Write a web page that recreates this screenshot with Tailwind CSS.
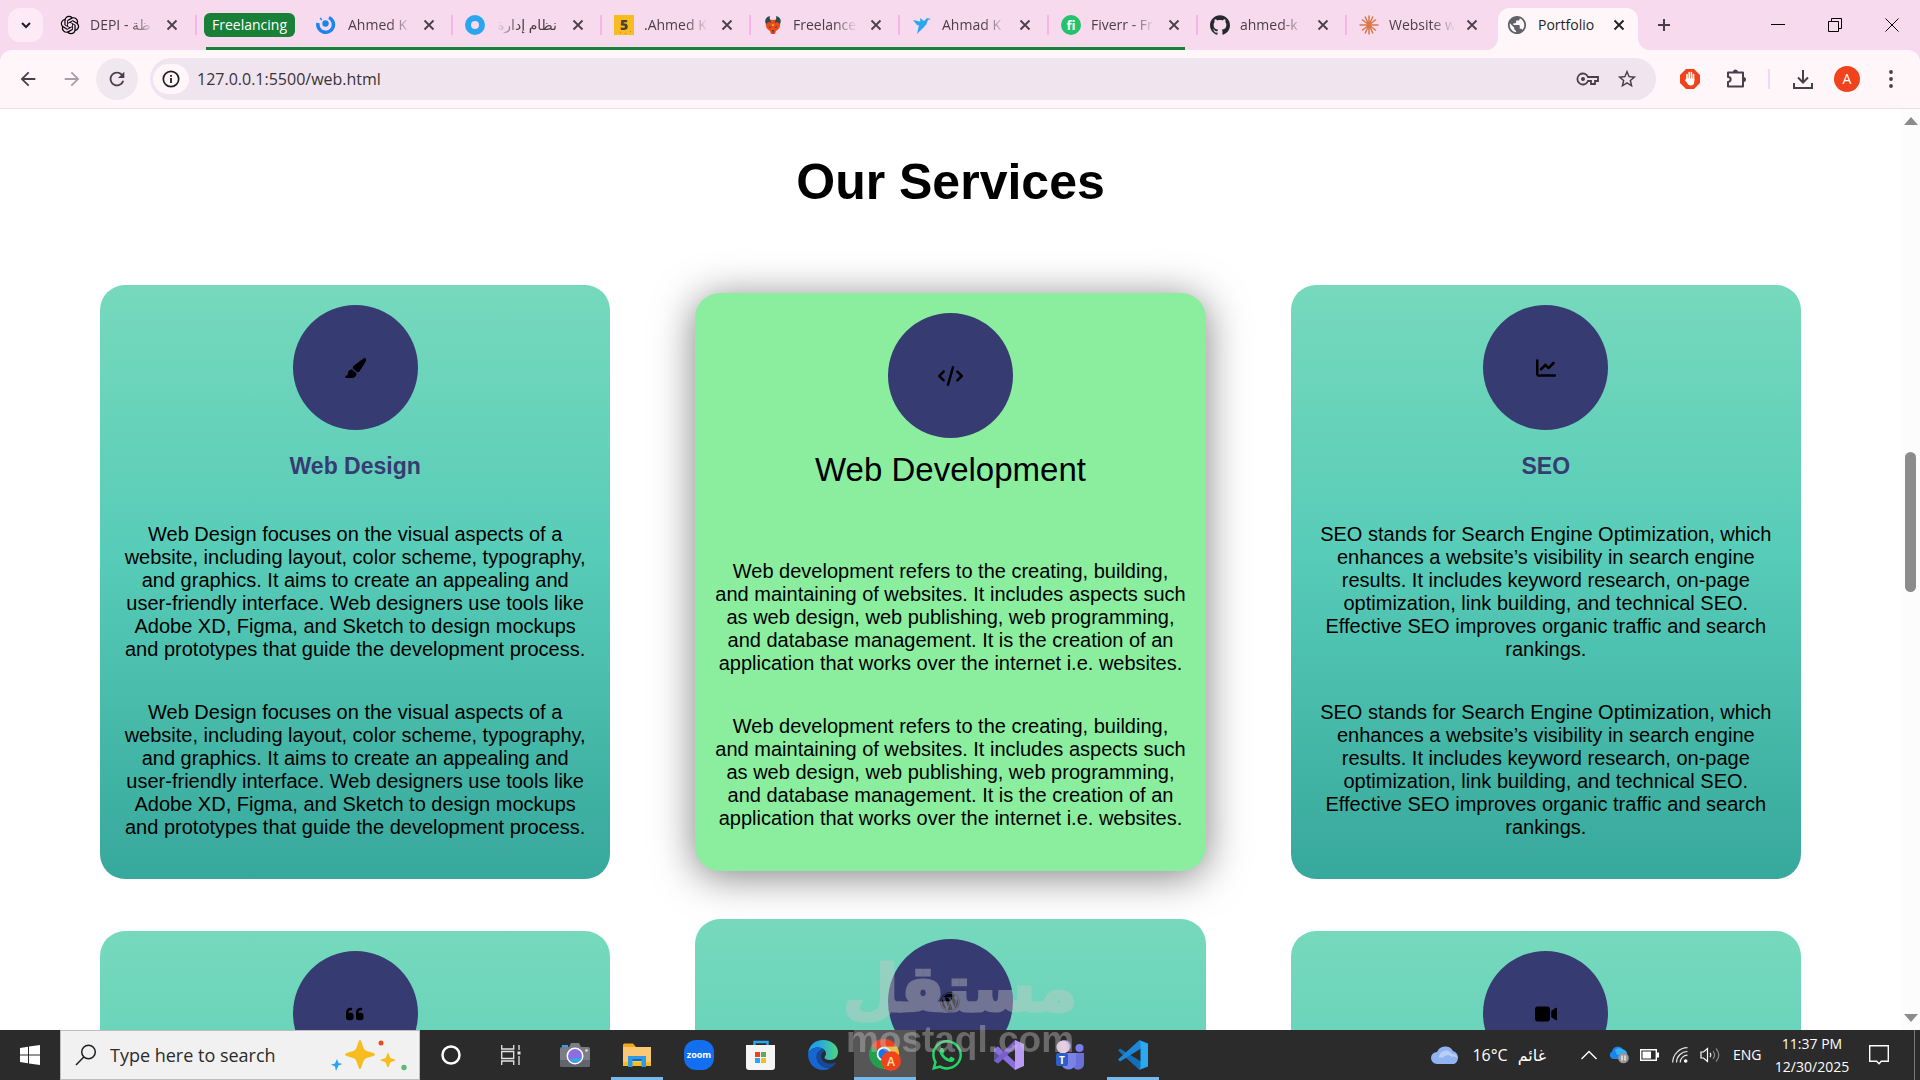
<!DOCTYPE html>
<html lang="en">
<head>
  <meta charset="UTF-8" />
  <meta name="viewport" content="width=device-width, initial-scale=1.0" />
  <title>Portfolio</title>
  <script src="https://cdn.jsdelivr.net/npm/@tailwindcss/browser@4"></script>
</head>
<body class="h-screen flex flex-col overflow-hidden bg-white font-['Open_Sans','DejaVu_Sans',sans-serif]">

  <svg class="hidden">
    <symbol id="x" viewBox="0 0 12 12"><path d="M1.5 1.5l9 9M10.5 1.5l-9 9" fill="none" stroke="currentColor" stroke-width="1.8" /></symbol>
    <symbol id="back" viewBox="0 0 24 24"><path fill="currentColor" d="M20 11H7.83l5.59-5.59L12 4l-8 8 8 8 1.41-1.41L7.83 13H20v-2z" /></symbol>
  </svg>

  <!-- Browser chrome -->
  <header class="bg-[#f7daee] text-[#4a3f48] shrink-0">
    <div class="h-[50px] flex items-center">
      <button aria-label="Search tabs" class="ml-2 w-[35px] h-[34px] rounded-xl bg-[#fdeaf6] flex items-center justify-center shrink-0">
        <svg class="w-3 h-3 text-[#1f1f1f]" viewBox="0 0 12 12"><path d="M2 4l4 4 4-4" fill="none" stroke="currentColor" stroke-width="2" /></svg>
      </button>
      <div class="ml-[5px] w-[149px] pl-3 flex items-center shrink-0 relative">
        <svg class="w-5 h-5 shrink-0 text-black" viewBox="-1 -1 26 26"><path fill="currentColor" d="M22.2819 9.8211a5.9847 5.9847 0 0 0-.5157-4.9108 6.0462 6.0462 0 0 0-6.5098-2.9A6.0651 6.0651 0 0 0 4.9807 4.1818a5.9847 5.9847 0 0 0-3.9977 2.9 6.0462 6.0462 0 0 0 .7427 7.0966 5.98 5.98 0 0 0 .511 4.9107 6.051 6.051 0 0 0 6.5146 2.9001A5.9847 5.9847 0 0 0 13.2599 24a6.0557 6.0557 0 0 0 5.7718-4.2058 5.9894 5.9894 0 0 0 3.9977-2.9001 6.0557 6.0557 0 0 0-.7475-7.0729zm-9.022 12.6081a4.4755 4.4755 0 0 1-2.8764-1.0408l.1419-.0804 4.7783-2.7582a.7948.7948 0 0 0 .3927-.6813v-6.7369l2.02 1.1686a.071.071 0 0 1 .038.052v5.5826a4.504 4.504 0 0 1-4.4945 4.4944zm-9.6607-4.1254a4.4708 4.4708 0 0 1-.5346-3.0137l.142.0852 4.783 2.7582a.7712.7712 0 0 0 .7806 0l5.8428-3.3685v2.3324a.0804.0804 0 0 1-.0332.0615L9.74 19.9502a4.4992 4.4992 0 0 1-6.1408-1.6464zM2.3408 7.8956a4.485 4.485 0 0 1 2.3655-1.9728V11.6a.7664.7664 0 0 0 .3879.6765l5.8144 3.3543-2.0201 1.1685a.0757.0757 0 0 1-.071 0l-4.8303-2.7865A4.504 4.504 0 0 1 2.3408 7.872zm16.5963 3.8558L13.1038 8.364 15.1192 7.2a.0757.0757 0 0 1 .071 0l4.8303 2.7913a4.4944 4.4944 0 0 1-.6765 8.1042v-5.6772a.79.79 0 0 0-.407-.667zm2.0107-3.0231l-.142-.0852-4.7735-2.7818a.7759.7759 0 0 0-.7854 0L9.409 9.2297V6.8974a.0662.0662 0 0 1 .0284-.0615l4.8303-2.7866a4.4992 4.4992 0 0 1 6.6802 4.66zM8.3065 12.863l-2.02-1.1638a.0804.0804 0 0 1-.038-.0567V6.0742a4.4992 4.4992 0 0 1 7.3757-3.4537l-.142.0805L8.704 5.459a.7948.7948 0 0 0-.3927.6813zm1.0976-2.3654l2.602-1.4998 2.6069 1.4998v2.9994l-2.5974 1.4997-2.6067-1.4997Z" /></svg>
        <span class="ml-[10px] w-[64px] mr-[1px] text-sm whitespace-nowrap overflow-hidden [mask-image:linear-gradient(to_right,#000_65%,transparent)]">DEPI - ظة</span>
        <button aria-label="Close tab" class="ml-[7px] w-5 h-5 flex items-center justify-center"><svg class="w-3 h-3"><use href="#x" /></svg></button>
        <span class="absolute right-0 w-[2px] h-5 bg-[#f5b5e8]"></span>
      </div>

      <!-- Tab group -->
      <div class="ml-[7px] h-full flex items-center relative shrink-0">
        <button class="w-[91px] h-6 mr-[9px] rounded-md bg-[#188038] text-white text-sm">Freelancing</button>
        <div class="w-[149px] pl-3 flex items-center relative">
          <svg class="w-5 h-5 shrink-0" viewBox="0 0 20 20" fill="none"><circle cx="9.5" cy="8.5" r="3.2" fill="#1a85ee" /><path d="M2 8a7.800 7.800 0 1 0 11-5.500" stroke="#1a85ee" stroke-width="3.5" /><path d="M4.500 4.500l1-1" stroke="#1a85ee" stroke-width="2.5" /></svg>
          <span class="ml-3 w-[64px] text-sm whitespace-nowrap overflow-hidden [mask-image:linear-gradient(to_right,#000_65%,transparent)]">Ahmed K</span>
          <button aria-label="Close tab" class="ml-[7px] w-5 h-5 flex items-center justify-center"><svg class="w-3 h-3"><use href="#x" /></svg></button>
          <span class="absolute right-0 w-[2px] h-5 bg-[#f5b5e8]"></span>
        </div>
        <div class="w-[149px] pl-3 flex items-center relative">
          <svg class="w-5 h-5 shrink-0" viewBox="0 0 20 20"><circle cx="10" cy="10" r="7" fill="none" stroke="#2ba6ee" stroke-width="6" /></svg>
          <span dir="rtl" class="ml-3 w-[64px] pr-1 text-sm whitespace-nowrap overflow-hidden [mask-image:linear-gradient(to_left,#000_65%,transparent)]">نظام إدارة</span>
          <button aria-label="Close tab" class="ml-[7px] w-5 h-5 flex items-center justify-center"><svg class="w-3 h-3"><use href="#x" /></svg></button>
          <span class="absolute right-0 w-[2px] h-5 bg-[#f5b5e8]"></span>
        </div>
        <div class="w-[149px] pl-3 flex items-center relative">
          <svg class="w-5 h-5 shrink-0" viewBox="0 0 20 20"><path fill="#f7bc1f" d="M0 0h20v20H0z" /><text x="10" y="15" text-anchor="middle" font-size="14" font-weight="800" fill="#4a3f2a">5</text><path fill="#e8731e" d="M6 17h1v1H6zM11 18h1v1h-1zM16 16h1v1h-1z" /></svg>
          <span class="ml-[10px] w-[64px] mr-[2px] text-sm whitespace-nowrap overflow-hidden [mask-image:linear-gradient(to_right,#000_65%,transparent)]">.Ahmed K</span>
          <button aria-label="Close tab" class="ml-[7px] w-5 h-5 flex items-center justify-center"><svg class="w-3 h-3"><use href="#x" /></svg></button>
          <span class="absolute right-0 w-[2px] h-5 bg-[#f5b5e8]"></span>
        </div>
        <div class="w-[149px] pl-3 flex items-center relative">
          <svg class="w-5 h-5 shrink-0" viewBox="0 0 20 20"><path fill="#ee4a1c" d="M10 5c5-1 8 2 7 6-.5 3-2.500 4-4 5l-1 3H8l-1-3c-1.500-1-3.500-2-4-5-1-4 2-7 7-6z" /><path fill="#2c4d4f" d="M7 1C3 2 1 5 3 9l3-2 2 1c0-3-2-4-1-7zM13 1c4 1 6 4 4 8l-3-2-2 1c0-3 2-4 1-7z" /><path fill="#2c4d4f" d="M6 11l2.500 1.500-2 .5zM14 11l-2.500 1.500 2 .5zM9 15h2l-1 4z" /><circle cx="10" cy="10" r="1" fill="#f7bc1f" /></svg>
          <span class="ml-[10px] w-[64px] mr-[2px] text-sm whitespace-nowrap overflow-hidden [mask-image:linear-gradient(to_right,#000_65%,transparent)]">Freelance</span>
          <button aria-label="Close tab" class="ml-[7px] w-5 h-5 flex items-center justify-center"><svg class="w-3 h-3"><use href="#x" /></svg></button>
          <span class="absolute right-0 w-[2px] h-5 bg-[#f5b5e8]"></span>
        </div>
        <div class="w-[149px] pl-3 flex items-center relative">
          <svg class="w-5 h-5 shrink-0" viewBox="0 0 20 20" fill="#29a6f0"><path d="M1 5l9 2 1 4-6-1z" /><path d="M8 3l4 3 3-3 4 1-3 1-2 5-5 3z" /><path d="M7 10l6 1-8 8z" /></svg>
          <span class="ml-[10px] w-[64px] mr-[2px] text-sm whitespace-nowrap overflow-hidden [mask-image:linear-gradient(to_right,#000_65%,transparent)]">Ahmad K</span>
          <button aria-label="Close tab" class="ml-[7px] w-5 h-5 flex items-center justify-center"><svg class="w-3 h-3"><use href="#x" /></svg></button>
          <span class="absolute right-0 w-[2px] h-5 bg-[#f5b5e8]"></span>
        </div>
        <div class="w-[149px] pl-3 flex items-center relative">
          <svg class="w-5 h-5 shrink-0" viewBox="0 0 20 20"><circle cx="10" cy="10" r="10" fill="#22c46b" /><text x="10" y="15" text-anchor="middle" font-size="13" font-weight="700" fill="#fff">fi</text></svg>
          <span class="ml-[10px] w-[64px] mr-[2px] text-sm whitespace-nowrap overflow-hidden [mask-image:linear-gradient(to_right,#000_65%,transparent)]">Fiverr - Fr</span>
          <button aria-label="Close tab" class="ml-[7px] w-5 h-5 flex items-center justify-center"><svg class="w-3 h-3"><use href="#x" /></svg></button>
          <span class="absolute right-0 w-[2px] h-5 bg-[#f5b5e8]"></span>
        </div>
        <span class="absolute left-[2px] right-[13px] bottom-0 h-[3px] bg-[#188038]"></span>
      </div>

      <div class="w-[149px] pl-3 flex items-center relative shrink-0">
        <svg class="w-5 h-5 shrink-0" viewBox="0 0 24 24"><path fill="#24292f" d="M12 .297c-6.63 0-12 5.373-12 12 0 5.303 3.438 9.8 8.205 11.385.6.113.82-.258.82-.577 0-.285-.01-1.04-.015-2.04-3.338.724-4.042-1.61-4.042-1.61C4.422 18.07 3.633 17.7 3.633 17.7c-1.087-.744.084-.729.084-.729 1.205.084 1.838 1.236 1.838 1.236 1.07 1.835 2.809 1.305 3.495.998.108-.776.417-1.305.76-1.605-2.665-.3-5.466-1.332-5.466-5.93 0-1.31.465-2.38 1.235-3.22-.135-.303-.54-1.523.105-3.176 0 0 1.005-.322 3.3 1.23.96-.267 1.98-.399 3-.405 1.02.006 2.04.138 3 .405 2.28-1.552 3.285-1.23 3.285-1.23.645 1.653.24 2.873.12 3.176.765.84 1.23 1.91 1.23 3.22 0 4.61-2.805 5.625-5.475 5.92.42.36.81 1.096.81 2.22 0 1.606-.015 2.896-.015 3.286 0 .315.21.69.825.57C20.565 22.092 24 17.592 24 12.297c0-6.627-5.373-12-12-12" /></svg>
        <span class="ml-[10px] w-[64px] mr-[2px] text-sm whitespace-nowrap overflow-hidden [mask-image:linear-gradient(to_right,#000_65%,transparent)]">ahmed-k</span>
        <button aria-label="Close tab" class="ml-[7px] w-5 h-5 flex items-center justify-center"><svg class="w-3 h-3"><use href="#x" /></svg></button>
        <span class="absolute right-0 w-[2px] h-5 bg-[#f5b5e8]"></span>
      </div>
      <div class="w-[149px] pl-3 flex items-center shrink-0">
        <svg class="w-5 h-5 shrink-0" viewBox="-10 -10 20 20" stroke="#d97746" stroke-width="1.5"><path d="M0-9.500V9.500M-9.500 0H9.500M-7-5.500L7 5.500M7-5.500L-7 5.500M-4-8.500L4 8.500M4-8.500L-4 8.500" /></svg>
        <span class="ml-[10px] w-[66px] text-sm whitespace-nowrap overflow-hidden [mask-image:linear-gradient(to_right,#000_65%,transparent)]">Website w</span>
        <button aria-label="Close tab" class="ml-[7px] w-5 h-5 flex items-center justify-center"><svg class="w-3 h-3"><use href="#x" /></svg></button>
      </div>

      <!-- Active tab -->
      <div class="ml-[2px] w-[140px] h-[42px] self-end pl-[9px] pb-2 flex items-center relative shrink-0 rounded-t-xl bg-[#fff6fa] text-[#1f1f1f]">
        <svg class="absolute bottom-0 -left-3 w-3 h-3" viewBox="0 0 12 12"><path fill="#fff6fa" d="M12 0v12H0A12 12 0 0 0 12 0z" /></svg>
        <svg class="absolute bottom-0 -right-3 w-3 h-3" viewBox="0 0 12 12"><path fill="#fff6fa" d="M0 0v12h12A12 12 0 0 1 0 0z" /></svg>
        <svg class="w-5 h-5 shrink-0" viewBox="1 1 22 22"><path fill="#5f6368" d="M12 2C6.480 2 2 6.480 2 12s4.480 10 10 10 10-4.480 10-10S17.520 2 12 2zm-1 17.930c-3.950-.49-7-3.850-7-7.930 0-.62.08-1.210.21-1.790L9 15v1c0 1.100.9 2 2 2v1.930zm6.900-2.540c-.26-.81-1-1.390-1.900-1.390h-1v-3c0-.55-.45-1-1-1H8v-2h2c.55 0 1-.45 1-1V7h2c1.100 0 2-.9 2-2v-.41c2.930 1.190 5 4.060 5 7.410 0 2.080-.8 3.970-2.100 5.390z" /></svg>
        <span class="ml-[11px] w-[64px] text-sm">Portfolio</span>
        <button aria-label="Close tab" class="ml-[7px] w-5 h-5 flex items-center justify-center"><svg class="w-3 h-3"><use href="#x" /></svg></button>
      </div>
      <button aria-label="New tab" class="ml-2 w-9 h-9 flex items-center justify-center"><svg class="w-3.5 h-3.5" viewBox="0 0 14 14"><path d="M7 1v12M1 7h12" stroke="currentColor" stroke-width="2" /></svg></button>

      <div class="ml-auto h-full flex text-black">
        <button aria-label="Minimize" class="w-[57px] flex items-center justify-center"><svg class="w-3.5 h-3.5" viewBox="0 0 14 14"><path d="M0 6.500h14" stroke="currentColor" /></svg></button>
        <button aria-label="Restore" class="w-[57px] flex items-center justify-center"><svg class="w-3.5 h-3.5" viewBox="0 0 14 14"><path d="M.5 3.500h10v10H.5zM3.500 3V.5h10v10H11" fill="none" stroke="currentColor" /></svg></button>
        <button aria-label="Close" class="w-[57px] flex items-center justify-center"><svg class="w-3.5 h-3.5" viewBox="0 0 14 14"><path d="M.5.5l13 13M13.500.5l-13 13" stroke="currentColor" /></svg></button>
      </div>
    </div>

    <div class="h-[59px] pl-[10px] pr-[7px] flex items-center rounded-t-xl bg-[#fff6fa] border-b border-[#f3dcea]">
      <button aria-label="Back" class="w-9 h-9 flex items-center justify-center"><svg class="w-[22px] h-[22px]"><use href="#back" /></svg></button>
      <button aria-label="Forward" class="ml-2 w-9 h-9 flex items-center justify-center rotate-180 text-[#a79fa5]"><svg class="w-[22px] h-[22px]"><use href="#back" /></svg></button>
      <button aria-label="Reload" class="ml-[6px] w-[42px] h-[42px] rounded-full bg-[#efe9ef] flex items-center justify-center"><svg class="w-[22px] h-[22px]" viewBox="0 0 24 24"><path fill="currentColor" d="M17.650 6.350C16.200 4.900 14.210 4 12 4c-4.420 0-7.990 3.580-7.990 8s3.570 8 7.990 8c3.730 0 6.840-2.550 7.730-6h-2.080c-.82 2.330-3.040 4-5.650 4-3.310 0-6-2.690-6-6s2.690-6 6-6c1.660 0 3.140.69 4.220 1.780L13 11h7V4l-2.350 2.350z" /></svg></button>
      <div class="ml-3 flex-1 h-[42px] rounded-full bg-[#f0e4ee] flex items-center pl-[3px] pr-[18px]">
        <button aria-label="View site information" class="w-9 h-[30px] rounded-full bg-[#fff6fa] text-[#1f1f1f] flex items-center justify-center"><svg class="w-[18px] h-[18px]" viewBox="0 0 18 18"><circle cx="9" cy="9" r="7.7" fill="none" stroke="currentColor" stroke-width="1.7" /><path d="M9 8v5M9 5v1.700" stroke="currentColor" stroke-width="1.8" /></svg></button>
        <input type="text" aria-label="Address bar" value="127.0.0.1:5500/web.html" class="ml-2 flex-1 bg-transparent text-base text-[#3a3338] outline-none" />
        <button aria-label="Manage passwords" class="w-10 flex justify-center"><svg class="w-6 h-6" viewBox="0 0 24 24" fill="none" stroke="currentColor" stroke-width="1.8"><path d="M12 10a5.500 5.500 0 1 0 0 4h3v3h4v-3h3v-4z" /><circle cx="7" cy="12" r="2" fill="currentColor" stroke="none" /></svg></button>
        <button aria-label="Bookmark this tab" class="w-[22px] ml-2 flex justify-center"><svg class="w-[22px] h-[22px]" viewBox="0 0 24 24"><path fill="currentColor" d="M22 9.240l-7.190-.62L12 2 9.190 8.630 2 9.240l5.460 4.730L5.820 21 12 17.270 18.180 21l-1.630-7.030L22 9.240zM12 15.400l-3.760 2.270 1-4.280-3.320-2.880 4.380-.38L12 6.100l1.710 4.040 4.380.38-3.320 2.880 1 4.280L12 15.400z" /></svg></button>
      </div>
      <button aria-label="AdBlock" class="ml-[11px] w-[46px] flex justify-center"><svg class="w-[22px] h-[22px]" viewBox="0 0 22 22"><path fill="#f0431d" d="M7 1h8l6 6v8l-6 6H7l-6-6V7z" /><path d="M8 12V6.500M10.200 11V4.500M12.400 11V4.500M14.500 12V6.500" stroke="#fff" stroke-width="1.6" stroke-linecap="round" /><path fill="#fff" d="M7.200 10.500h8.100v3c0 2.500-1.300 4-3.500 4-2 0-3-1-3.600-2.500L5.800 12c.5-.7 1-.5 1.400 0z" /></svg></button>
      <button aria-label="Extensions" class="w-[46px] flex justify-center"><svg class="w-6 h-6" viewBox="0 0 24 24"><path d="M4 5.500h15v14H4v-4.500c3.500-.5 3.500-5 0-5z" fill="none" stroke="currentColor" stroke-width="2" stroke-linejoin="round" /><path d="M9 5a2.500 2.500 0 0 1 5 0zM19.500 10a2.500 2.500 0 0 1 0 5z" fill="currentColor" /></svg></button>
      <span class="ml-[9px] mr-[11px] w-[2px] h-5 bg-[#f7d5ec]"></span>
      <button aria-label="Downloads" class="w-11 flex justify-center"><svg class="w-6 h-6" viewBox="0 0 24 24" fill="none" stroke="currentColor" stroke-width="2"><path d="M12 3v12M7 10.500l5 5 5-5M3 16v5h18v-5" /></svg></button>
      <button aria-label="Profile" class="mx-[9px] w-[26px] h-[26px] rounded-full bg-[#f0431d] text-white text-sm">A</button>
      <button aria-label="Menu" class="w-11 flex justify-center"><svg class="w-5 h-5" viewBox="0 0 20 20" fill="currentColor"><circle cx="10" cy="3" r="1.9" /><circle cx="10" cy="10" r="1.9" /><circle cx="10" cy="17" r="1.9" /></svg></button>
    </div>
  </header>

  <!-- Page -->
  <div class="flex-1 min-h-0 flex">
    <main class="flex-1 overflow-hidden px-[100px] pt-11 text-center text-black font-['Liberation_Sans',Arial,sans-serif]">
      <h1 class="text-[50px] leading-[58px] font-bold mb-[74px]">Our Services</h1>
      <div class="grid grid-cols-3 gap-x-[85px] gap-y-10 items-center">

        <section class="p-5 rounded-[25px] bg-linear-to-b from-[#76d9bc] via-[#57ccb8] via-45% to-[#37a89c]">
          <div class="w-[125px] h-[125px] mx-auto rounded-full bg-[#363c72] flex items-center justify-center">
            <svg class="h-5" viewBox="0 0 576 512"><path d="M339.300 367.100c27.300-3.900 51.900-19.400 67.200-42.900L568.200 74.100c12.600-19.500 9.400-45.300-7.600-61.200S517.700-4.400 499.100 9.600L262.400 187.200c-24 18-38.200 46.100-38.400 76.100L339.300 367.100zm-19.600 25.400l-116-104.400C143.900 290.300 96 339.600 96 400c0 3.900 .2 7.800 .6 11.600C98.400 429.100 86.400 448 68.800 448L64 448c-17.700 0-32 14.300-32 32s14.300 32 32 32l144 0c61.900 0 112-50.100 112-112c0-2.500-.1-5-.2-7.500z" /></svg>
          </div>
          <h3 class="my-[23px] text-[23px] leading-[27px] font-bold text-[#363c72]">Web Design</h3>
          <p class="my-5 pt-5 text-xl leading-[23px]">Web Design focuses on the visual aspects of a website, including layout, color scheme, typography, and graphics. It aims to create an appealing and user-friendly interface. Web designers use tools like Adobe XD, Figma, and Sketch to design mockups and prototypes that guide the development process.</p>
          <p class="mt-10 mb-5 text-xl leading-[23px]">Web Design focuses on the visual aspects of a website, including layout, color scheme, typography, and graphics. It aims to create an appealing and user-friendly interface. Web designers use tools like Adobe XD, Figma, and Sketch to design mockups and prototypes that guide the development process.</p>
        </section>

        <section class="p-5 rounded-[25px] bg-[#8bee9f] shadow-[0_5px_40px_rgba(0,0,0,0.5)]">
          <div class="w-[125px] h-[125px] mx-auto rounded-full bg-[#363c72] flex items-center justify-center">
            <svg class="h-5" viewBox="0 0 640 512"><path d="M392.800 1.200c-17-4.900-34.700 5-39.600 22l-128 448c-4.900 17 5 34.700 22 39.600s34.700-5 39.600-22l128-448c4.900-17-5-34.700-22-39.600zm80.600 120.100c-12.500 12.500-12.500 32.800 0 45.300L562.700 256l-89.400 89.400c-12.500 12.500-12.500 32.800 0 45.300s32.800 12.500 45.300 0l112-112c12.500-12.500 12.500-32.800 0-45.300l-112-112c-12.500-12.500-32.800-12.500-45.300 0zm-306.700 0c-12.500-12.500-32.800-12.500-45.300 0l-112 112c-12.500 12.500-12.500 32.800 0 45.300l112 112c12.500 12.500 32.800 12.500 45.300 0s12.500-32.800 0-45.300L77.300 256l89.400-89.400c12.500-12.500 12.500-32.800 0-45.300z" /></svg>
          </div>
          <h3 class="mt-[14px] mb-[72px] text-[33px] leading-9">Web Development</h3>
          <p class="text-xl leading-[23px]">Web development refers to the creating, building, and maintaining of websites. It includes aspects such as web design, web publishing, web programming, and database management. It is the creation of an application that works over the internet i.e. websites.</p>
          <p class="mt-10 mb-[21px] text-xl leading-[23px]">Web development refers to the creating, building, and maintaining of websites. It includes aspects such as web design, web publishing, web programming, and database management. It is the creation of an application that works over the internet i.e. websites.</p>
        </section>

        <section class="p-5 rounded-[25px] bg-linear-to-b from-[#76d9bc] via-[#57ccb8] via-45% to-[#37a89c]">
          <div class="w-[125px] h-[125px] mx-auto rounded-full bg-[#363c72] flex items-center justify-center">
            <svg class="h-5" viewBox="0 0 512 512"><path d="M64 64c0-17.700-14.300-32-32-32S0 46.300 0 64L0 400c0 44.200 35.800 80 80 80l400 0c17.700 0 32-14.300 32-32s-14.300-32-32-32L80 416c-8.800 0-16-7.200-16-16L64 64zm406.600 86.600c12.500-12.500 12.500-32.800 0-45.300s-32.800-12.500-45.300 0L320 210.700l-57.400-57.400c-12.500-12.500-32.800-12.500-45.300 0l-112 112c-12.500 12.500-12.500 32.800 0 45.300s32.800 12.500 45.300 0L240 221.300l57.400 57.400c12.500 12.500 32.800 12.500 45.300 0l128-128z" /></svg>
          </div>
          <h3 class="my-[23px] text-[23px] leading-[27px] font-bold text-[#363c72]">SEO</h3>
          <p class="my-5 pt-5 text-xl leading-[23px]">SEO stands for Search Engine Optimization, which enhances a website’s visibility in search engine results. It includes keyword research, on-page optimization, link building, and technical SEO. Effective SEO improves organic traffic and search rankings.</p>
          <p class="mt-10 mb-5 text-xl leading-[23px]">SEO stands for Search Engine Optimization, which enhances a website’s visibility in search engine results. It includes keyword research, on-page optimization, link building, and technical SEO. Effective SEO improves organic traffic and search rankings.</p>
        </section>

        <section class="p-5 min-h-[594px] rounded-[25px] bg-linear-to-b from-[#76d9bc] via-[#57ccb8] via-45% to-[#37a89c]">
          <div class="w-[125px] h-[125px] mx-auto rounded-full bg-[#363c72] flex items-center justify-center">
            <svg class="h-5" viewBox="0 0 448 512"><path d="M0 216C0 149.700 53.700 96 120 96l8 0c17.700 0 32 14.300 32 32s-14.300 32-32 32l-8 0c-30.900 0-56 25.100-56 56l0 8 64 0c35.300 0 64 28.700 64 64l0 64c0 35.300-28.700 64-64 64l-64 0c-35.300 0-64-28.700-64-64l0-32 0-32 0-72zm256 0c0-66.300 53.700-120 120-120l8 0c17.700 0 32 14.300 32 32s-14.300 32-32 32l-8 0c-30.900 0-56 25.100-56 56l0 8 64 0c35.300 0 64 28.700 64 64l0 64c0 35.300-28.700 64-64 64l-64 0c-35.300 0-64-28.700-64-64l0-32 0-32 0-72z" /></svg>
          </div>
        </section>

        <section class="p-5 min-h-[618px] rounded-[25px] bg-linear-to-b from-[#76d9bc] via-[#57ccb8] via-45% to-[#37a89c]">
          <div class="w-[125px] h-[125px] mx-auto rounded-full bg-[#363c72] flex items-center justify-center">
            <svg class="h-5" viewBox="0 0 512 512"><path d="M61.700 169.400l101.500 278C92.200 413 43.300 340.200 43.300 256c0-30.900 6.600-60.100 18.400-86.600zm337.900 75.900c0-26.300-9.400-44.500-17.500-58.700-10.800-17.500-20.900-32.400-20.900-49.900 0-19.600 14.800-37.800 35.700-37.800 .9 0 1.800 .1 2.800 .2-37.900-34.700-88.300-55.900-143.700-55.900-74.300 0-139.700 38.100-177.800 95.900 5 .2 9.700 .3 13.700 .3 22.200 0 56.700-2.700 56.700-2.700 11.500-.7 12.800 16.200 1.400 17.500 0 0-11.500 1.300-24.300 2l77.500 230.400L249.800 247l-33.100-90.800c-11.500-.7-22.300-2-22.300-2-11.500-.7-10.100-18.200 1.300-17.500 0 0 35.100 2.700 56 2.700 22.200 0 56.700-2.700 56.700-2.700 11.500-.7 12.800 16.200 1.400 17.500 0 0-11.500 1.300-24.300 2l76.900 228.700 21.200-70.900c9-29.400 16-50.500 16-68.700zm-139.900 29.300l-63.800 185.500c19.100 5.600 39.200 8.700 60.100 8.700 24.800 0 48.500-4.300 70.600-12.100-.6-.9-1.100-1.900-1.500-2.900l-65.400-179.200zm183-120.700c.9 6.800 1.400 14 1.400 21.900 0 21.600-4 45.800-16.200 76.200l-65 187.900C426.200 403 468.700 334.500 468.700 256c0-37-9.400-71.800-26-102.100zM504 256c0 136.800-111.300 248-248 248C119.200 504 8 392.700 8 256 8 119.200 119.200 8 256 8c136.700 0 248 111.200 248 248zm-11.400 0c0-130.500-106.200-236.600-236.600-236.600C125.500 19.400 19.400 125.500 19.400 256S125.600 492.600 256 492.600c130.500 0 236.600-106.100 236.600-236.600z" /></svg>
          </div>
        </section>

        <section class="p-5 min-h-[594px] rounded-[25px] bg-linear-to-b from-[#76d9bc] via-[#57ccb8] via-45% to-[#37a89c]">
          <div class="w-[125px] h-[125px] mx-auto rounded-full bg-[#363c72] flex items-center justify-center">
            <svg class="h-5" viewBox="0 0 576 512"><path d="M0 128C0 92.700 28.700 64 64 64l256 0c35.300 0 64 28.700 64 64l0 256c0 35.300-28.700 64-64 64L64 448c-35.300 0-64-28.700-64-64L0 128zM559.100 99.800c10.400 5.600 16.900 16.400 16.900 28.200l0 256c0 11.800-6.500 22.600-16.900 28.200s-23 5-32.900-1.600l-96-64L416 337.100l0-17.100 0-128 0-17.100 14.200-9.500 96-64c9.800-6.500 22.400-7.200 32.900-1.600z" /></svg>
          </div>
        </section>
      </div>
    </main>

    <!-- Scrollbar -->
    <div class="w-[19px] bg-[#fcfcfc] flex flex-col items-center py-[7px] shrink-0">
      <svg class="w-3.5 h-2.5" viewBox="0 0 12 10" preserveAspectRatio="none"><path fill="#8b8b8b" d="M6 1l6 8H0z" /></svg>
      <div class="mt-[326px] w-[11px] h-[140px] rounded-full bg-[#8b8b8b]"></div>
      <svg class="mt-auto w-3.5 h-2.5" viewBox="0 0 12 10" preserveAspectRatio="none"><path fill="#8b8b8b" d="M6 9l6-8H0z" /></svg>
    </div>
  </div>

  <!-- Taskbar -->
  <footer class="h-[50px] shrink-0 bg-[#2b2b2b] text-white flex">
    <button aria-label="Start" class="w-[60px] flex items-center justify-center">
      <svg class="w-5 h-5" viewBox="0 0 20 20" fill="#fff"><path d="M0 3l8-1.200v7.700H0zM9 1.600L20 0v9.500H9zM0 10.500h8v7.700L0 17zM9 10.500h11V20L9 18.400z" /></svg>
    </button>
    <label class="w-[360px] bg-[#f1f1f1] border border-[#bdbdbd] flex items-center pl-3.5 text-[#2b2b2b]">
      <svg class="w-[22px] h-[22px] shrink-0" viewBox="0 0 22 22" fill="none" stroke="#1f1f1f" stroke-width="1.5"><circle cx="13.5" cy="8" r="6.8" /><path d="M8.800 13L1 21" /></svg>
      <input type="text" aria-label="Search" placeholder="Type here to search" class="ml-[13px] w-[200px] bg-transparent text-lg placeholder:text-[#2b2b2b] outline-none" />
      <svg class="ml-auto mr-2.5 w-20 h-8 shrink-0" viewBox="0 0 80 32"><path fill="#f7bc1f" d="M31 1c2 0 2.500 8 5 10s10 2.500 10 4.500-7.500 2.500-10 4.500-3 10-5 10-2.500-8-5-10-10-2.500-10-4.500 7.500-2.500 10-4.500 3-10 5-10zM59 14c1 0 1.500 4 2.500 5s5 1.200 5 2.200-4 1.200-5 2.200-1.500 5-2.500 5-1.500-4-2.500-5-5-1.200-5-2.200 4-1.200 5-2.200 1.500-5 2.500-5z" /><path fill="#29a6f0" d="M8 20l1.500 4 4 1-4 1.500L7 32l-1-4.500-4-2 4-1z" /><circle cx="52" cy="4" r="2.5" fill="#e8491e" /><circle cx="75" cy="28.500" r="2.700" fill="#5cb874" /></svg>
    </label>

    <button aria-label="Cortana" class="w-[62px] flex items-center justify-center"><svg class="w-5 h-5" viewBox="0 0 20 20"><circle cx="10" cy="10" r="8.5" fill="none" stroke="#fff" stroke-width="2.5" /></svg></button>
    <button aria-label="Task View" class="w-[62px] flex items-center justify-center pr-1"><svg class="w-5 h-5" viewBox="0 0 20 20" fill="none" stroke="#e5e5e5" stroke-width="1.3"><path d="M.7 0v4h12V0M.7 20v-4h12v4M.7 6.500h12v7H.7zM18 0v5M18 11v9" /><path stroke-width="3" d="M18 6.500v3" /></svg></button>
    <button aria-label="Camera" class="w-[62px] flex items-center justify-center"><svg class="w-[30px] h-6" viewBox="0 0 30 24"><path fill="#29a6f0" d="M2 2h6v4H2z" /><path fill="#7a7d86" d="M9 4l2-4h8l2 4h7a2 2 0 0 1 2 2v16a2 2 0 0 1-2 2H2a2 2 0 0 1-2-2V6a2 2 0 0 1 2-2z" /><path fill="#62656e" d="M0 17h30v5a2 2 0 0 1-2 2H2a2 2 0 0 1-2-2z" /><circle cx="15" cy="13" r="8.5" fill="#fff" /><circle cx="15" cy="13" r="7" fill="#8b6ee0" /><path fill="#38a5ea" d="M9 16a7 7 0 0 0 12.800-1.500z" /><circle cx="26.500" cy="7.500" r="1.300" fill="#ddd" /></svg></button>
    <button aria-label="File Explorer" class="w-[62px] flex items-center justify-center relative"><svg class="w-7 h-6" viewBox="0 0 28 24"><path fill="#f2a91c" d="M0 2a1.500 1.500 0 0 1 1.500-1.500H10L13 4H0z" /><path fill="#fbc876" d="M0 4h28v18.500H0z" /><path fill="#f7bc1f" d="M0 19h28v4H0z" /><path fill="#2b9be8" d="M5 13h18v11h-4.500v-6h-9v6H5z" /><path fill="#1667b8" d="M9.500 16h9v2h-9z" /></svg><span class="absolute bottom-0 inset-x-[5px] h-[3px] bg-[#76b9ed]"></span></button>
    <button aria-label="Zoom" class="w-[62px] flex items-center justify-center"><svg class="w-[30px] h-[30px]" viewBox="0 0 30 30"><rect width="30" height="30" rx="12" fill="#126ff0" /><text x="15" y="18" text-anchor="middle" font-size="9" font-weight="700" fill="#fff">zoom</text></svg></button>
    <button aria-label="Microsoft Store" class="w-[62px] flex items-center justify-center"><svg class="w-[30px] h-[30px]" viewBox="0 0 30 30"><path d="M8.500 6V2h13v4" fill="none" stroke="#29a6f0" stroke-width="2.5" /><path fill="#f5f5f5" d="M0 5h29v22a3 3 0 0 1-3 3H3a3 3 0 0 1-3-3z" /><path fill="#f0431d" d="M9 12h5v5H9z" /><path fill="#5fa85c" d="M15 12h5v5h-5z" /><path fill="#29a6f0" d="M9 18h5v5H9z" /><path fill="#f7bc1f" d="M15 18h5v5h-5z" /></svg></button>
    <button aria-label="Microsoft Edge" class="w-[62px] flex items-center justify-center">
      <svg class="w-[30px] h-[30px]" viewBox="0 0 30 30">
        <defs><linearGradient id="edge"><stop offset="0.3" stop-color="#1fa4e8" /><stop offset="1" stop-color="#4fd57e" /></linearGradient></defs>
        <path fill="url(#edge)" d="M0 14C1 5 7 0 15 0c9 0 15 6 15 12 0 5-3.500 8-8 8-3.500 0-5.500-1-5.500-2.500 0-1 1.500-1.500 1.500-4 0-3-3.500-6-8-6C5 7.500 1 10 0 14z" />
        <path fill="#1667d0" d="M0 14c1-4 5-6.500 10-6.500 2 0 4 .5 5.500 1.500C9 10 7 17 10 22c2.500 4 8 7 13 5.500-2 1.700-5 2.500-8 2.500C6.500 30 0 23.500 0 14z" />
        <path fill="#134a9c" d="M15.500 9C9 10 7 17 10 22c2.500 4 8 7 13 5.500 1.800-.9 3.500-2.500 4.500-4 .5-.8 0-1.300-1-.8-6 2.500-13-.5-13.500-6.200-.2-2.500 1.500-4.500 3.500-5.500z" />
      </svg>
    </button>
    <button aria-label="Google Chrome" class="w-[62px] flex items-center justify-center relative bg-[#565656]">
      <svg class="w-[32px] h-[32px]" viewBox="0 0 32 32"><path fill="#ea4328" d="M15 15L2 7.500A15 15 0 0 1 28 7.500H15z" /><path fill="#22a04b" d="M15 15v15A15 15 0 0 1 2 7.500z" /><path fill="#f7bc1f" d="M15 15V7.500h13A15 15 0 0 1 15 30z" /><circle cx="15" cy="15" r="7.3" fill="#fff" /><circle cx="15" cy="15" r="5.6" fill="#1a73e8" /><circle cx="22" cy="22" r="10" fill="#f0431d" /><text x="22" y="26.500" text-anchor="middle" font-size="12" font-weight="600" fill="#fde0a0">A</text></svg>
      <span class="absolute bottom-0 inset-x-0 h-[3px] bg-[#76b9ed]"></span>
    </button>
    <button aria-label="WhatsApp" class="w-[62px] flex items-center justify-center"><svg class="w-[30px] h-[30px]" viewBox="0 32 448 448"><path fill="#25d366" d="M380.900 97.100C339 55.100 283.200 32 223.900 32c-122.400 0-222 99.600-222 222 0 39.100 10.200 77.300 29.600 111L0 480l117.700-30.900c32.400 17.700 68.900 27 106.100 27h.1c122.300 0 224.100-99.600 224.100-222 0-59.300-25.200-115-67.100-157zm-157 341.600c-33.200 0-65.700-8.900-94-25.700l-6.700-4-69.800 18.300L72 359.200l-4.400-7c-18.500-29.400-28.200-63.300-28.200-98.200 0-101.700 82.800-184.500 184.600-184.500 49.300 0 95.600 19.200 130.400 54.100 34.800 34.900 56.200 81.200 56.100 130.500 0 101.800-84.900 184.600-186.600 184.600zm101.200-138.200c-5.500-2.800-32.800-16.200-37.900-18-5.100-1.900-8.800-2.800-12.500 2.800-3.700 5.600-14.300 18-17.600 21.800-3.200 3.700-6.500 4.200-12 1.400-32.600-16.300-54-29.100-75.500-66-5.700-9.800 5.700-9.100 16.300-30.300 1.800-3.700.9-6.900-.5-9.700-1.400-2.800-12.500-30.100-17.100-41.200-4.500-10.800-9.100-9.300-12.500-9.500-3.200-.2-6.900-.2-10.600-.2-3.700 0-9.700 1.400-14.800 6.900-5.100 5.600-19.400 19-19.400 46.300 0 27.300 19.900 53.700 22.600 57.400 2.800 3.700 39.100 59.700 94.800 83.800 35.200 15.200 49 16.500 66.600 13.900 10.700-1.600 32.800-13.400 37.400-26.400 4.600-13 4.600-24.100 3.200-26.400-1.300-2.500-5-3.900-10.500-6.600z" /></svg></button>
    <button aria-label="Visual Studio" class="w-[62px] flex items-center justify-center"><svg class="w-[30px] h-[30px]" viewBox="0 0 30 30"><path fill="#5b5488" d="M0 9l4-2.500 4 3.500v10l-4 3.500L0 21z" /><path fill="#8a6fe0" d="M4 6.500L21 22v8L0 11V9z" /><path fill="#7a5ed0" d="M0 21L21 0v8L4 23.500z" /><path fill="#b79bf5" d="M21 0l9 4v22l-9 4z" /></svg></button>
    <button aria-label="Microsoft Teams" class="w-[62px] flex items-center justify-center"><svg class="w-[30px] h-[30px]" viewBox="0 0 30 30"><circle cx="23.500" cy="8" r="4" fill="#7b7fe8" /><path fill="#6b6fd8" d="M18 13h10v10a6 6 0 0 1-10 5z" /><circle cx="9" cy="6" r="6" fill="#8f88ee" /><path fill="#7b83eb" d="M5 13h15v9a7.500 7.500 0 0 1-15 0z" /><circle cx="7" cy="7" r="6.500" fill="#e6cfe0" /><rect y="13" width="12" height="13" rx="2" fill="#2d5fc4" /><text x="6" y="23.500" text-anchor="middle" font-size="10" font-weight="700" fill="#fff">T</text></svg></button>
    <button aria-label="Visual Studio Code" class="w-[62px] flex items-center justify-center relative"><svg class="w-[30px] h-[30px]" viewBox="0 0 30 30"><path fill="#1270b8" d="M2 8.500L0 10.500l21 19 2-1v-7z" /><path fill="#1e88d8" d="M2 21.500l-2-2L21 .5l2 1v7z" /><path fill="#29a9f2" d="M21 0l9 3.500v23L21 30l1.500-2V2z" /></svg><span class="absolute bottom-0 inset-x-[5px] h-[3px] bg-[#76b9ed]"></span></button>

    <div class="ml-auto flex items-center">
      <button class="flex items-center text-base">
        <svg class="w-[30px] h-5 mr-[11px]" viewBox="0 0 30 20"><path fill="#90b4f0" d="M6 19a6 6 0 0 1 0-12A9 9 0 0 1 22 6a7 7 0 0 1 1 13z" /><path fill="#b9ccfa" d="M8 13a7 7 0 0 1 13-4 6 6 0 0 1 6 5c-1-2-4-3-6-2-3-3-8-2-9 1-1-1-3-1-4 0z" /></svg>
        16°C<span class="ml-2.5">غائم</span>
      </button>
      <button aria-label="Show hidden icons" class="ml-[28px] w-[30px] flex justify-center"><svg class="w-4 h-2.5" viewBox="0 0 16 10"><path d="M.5 9L8 1.500 15.500 9" fill="none" stroke="#fff" stroke-width="1.4" /></svg></button>
      <button aria-label="OneDrive" class="w-[30px] flex justify-center"><svg class="w-5 h-[18px]" viewBox="0 0 20 18"><path fill="#1a85e8" d="M4 13A4 4 0 0 1 3 5.500 6 6 0 0 1 14 3.500c3 .5 4.500 3 4 6L12 13z" /><path fill="#35b0f5" d="M6 4a6 6 0 0 1 8-.5c2 .5 3.500 2 4 4L8 9z" /><circle cx="14.500" cy="12" r="5.300" fill="#9a979b" /><path d="M13 9.500v5M16 9.500v5" stroke="#fff" stroke-width="1.2" /></svg></button>
      <button aria-label="Battery" class="w-[31px] flex justify-center"><svg class="w-[19px] h-3" viewBox="0 0 19 12"><path d="M.7.700h15.600v10.600H.700z" fill="none" stroke="#fff" stroke-width="1.4" /><path fill="#fff" d="M2.500 2.500H11v7H2.500zM17 3.500h2v5h-2z" /></svg></button>
      <button aria-label="Network" class="w-[30px] flex justify-center"><svg class="w-4 h-4" viewBox="0 0 16 16" fill="none" stroke="#e5e5e5" stroke-width="1.2"><path d="M.700 15.500A15 15 0 0 1 15.500.700M4.500 15.500A11 11 0 0 1 15.500 4.500M8.200 15.500a7.300 7.300 0 0 1 7.300-7.300" /><circle cx="13.700" cy="14" r="1.800" fill="#fff" stroke="none" /></svg></button>
      <button aria-label="Volume" class="w-[30px] flex justify-center"><svg class="w-5 h-4" viewBox="0 0 20 16" fill="none" stroke="#fff" stroke-width="1.2"><path d="M1 5h2.500L7.500 1.500v13L3.500 11H1zM10 6c1 1 1 3 0 4" /><path stroke="#8b8b8b" d="M13 4c2 2.500 2 5.500 0 8M16 1.500c3.500 4 3.500 9 0 13" /></svg></button>
      <button class="ml-2 w-8 text-sm text-left">ENG</button>
      <button class="ml-[5px] w-[84px] text-sm leading-[23px]">11:37 PM<br />12/30/2025</button>
      <button aria-label="Notifications" class="w-[50px] flex justify-center"><svg class="w-5 h-5" viewBox="0 0 20 20"><path d="M.7.700h18.600v15.600h-7L10 18.800l-2.300-2.500h-7z" fill="none" stroke="#fff" stroke-width="1.4" /></svg></button>
      <span class="ml-2.5 mr-[5px] w-px h-[50px] bg-[#7a7a7a]"></span>
    </div>
  </footer>

  <!-- Watermark over the page and the taskbar -->
  <div class="fixed inset-x-0 bottom-5 flex flex-col items-center pointer-events-none font-bold text-[#ccc8c8] opacity-40">
    <span class="text-[64px] leading-[62px] font-['DejaVu_Sans',sans-serif] [-webkit-text-stroke:3px_#ccc8c8]">مستقل</span>
    <span class="text-[37px] leading-10 font-['Liberation_Sans',Arial,sans-serif]">mostaql.com</span>
  </div>
</body>
</html>
